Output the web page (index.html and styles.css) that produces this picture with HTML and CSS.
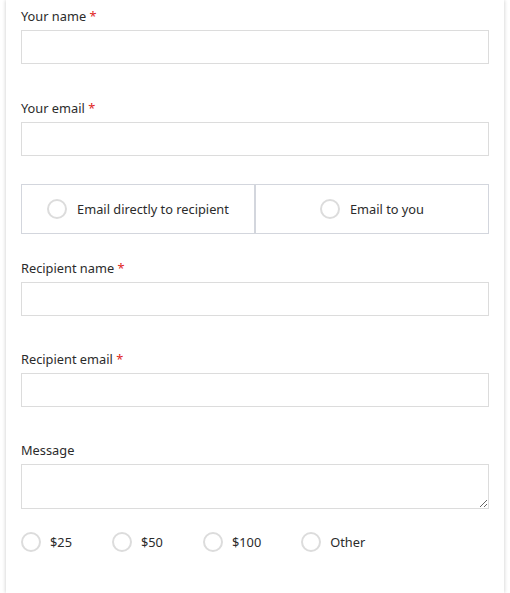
FILE: index.html
```html
<!DOCTYPE html>
<html lang="en">
<head>
<meta charset="utf-8">
<title>Gift card</title>
<link rel="stylesheet" href="styles.css">
</head>
<body>
<div class="card">
  <form class="form">
    <div class="field">
      <label class="label" for="yn">Your name <span class="req">*</span></label>
      <input class="input" id="yn" type="text">
    </div>
    <div class="field field-tight">
      <label class="label" for="ye">Your email <span class="req">*</span></label>
      <input class="input" id="ye" type="email">
    </div>
    <div class="choice-group">
      <label class="choice-box">
        <input class="radio" type="radio" name="send">
        <span>Email directly to recipient</span>
      </label>
      <label class="choice-box">
        <input class="radio" type="radio" name="send">
        <span>Email to you</span>
      </label>
    </div>
    <div class="field field-r">
      <label class="label" for="rn">Recipient name <span class="req">*</span></label>
      <input class="input" id="rn" type="text">
    </div>
    <div class="field field-r">
      <label class="label" for="re">Recipient email <span class="req">*</span></label>
      <input class="input" id="re" type="email">
    </div>
    <div class="field field-msg">
      <label class="label" for="msg">Message</label>
      <textarea class="textarea" id="msg"></textarea>
    </div>
    <div class="amounts">
      <label class="amount"><input class="radio" type="radio" name="amt"><span>$25</span></label>
      <label class="amount"><input class="radio" type="radio" name="amt"><span>$50</span></label>
      <label class="amount"><input class="radio" type="radio" name="amt"><span>$100</span></label>
      <label class="amount"><input class="radio" type="radio" name="amt"><span>Other</span></label>
    </div>
  </form>
</div>
</body>
</html>
```

FILE: styles.css
```css
html, body {
  margin: 0;
  padding: 0;
  background: #fff;
}
body {
  font-family: "Noto Sans", "Open Sans", sans-serif;
  font-size: 12.8px;
  color: #2b2b2b;
}
.card {
  margin-left: 6px;
  width: 498px;
  height: 593px;
  overflow: hidden;
  background: #fff;
  box-shadow: 0 0 4px rgba(0, 0, 0, 0.22);
  box-sizing: border-box;
  padding: 6px 15px 0;
}
.form {
  display: flex;
  flex-direction: column;
}
.field {
  display: flex;
  flex-direction: column;
  margin-bottom: 34px;
}
.field-tight {
  margin-bottom: 28px;
}
.field-r {
  margin-bottom: 33px;
}
.field-msg {
  margin-bottom: 23px;
}
.label {
  display: block;
  line-height: 20px;
  margin-bottom: 4px;
}
.req {
  color: #e02424;
}
.input, .textarea {
  display: block;
  box-sizing: border-box;
  width: 100%;
  height: 34px;
  margin: 0;
  border: 1px solid #dcdcdc;
  border-radius: 0;
  background: #fff;
  font: inherit;
  outline: none;
}
.textarea {
  height: 45px;
  resize: vertical;
}
.choice-group {
  display: flex;
  height: 50px;
  margin-bottom: 24px;
}
.choice-box {
  flex: 1;
  display: flex;
  align-items: center;
  justify-content: center;
  gap: 10px;
  border: 1px solid #d3d6dd;
  box-sizing: border-box;
}
.radio {
  appearance: none;
  -webkit-appearance: none;
  margin: 0;
  width: 20px;
  height: 20px;
  box-sizing: border-box;
  border: 2px solid #dcdcdc;
  border-radius: 50%;
  background: #fff;
  flex: none;
}
.amounts {
  display: flex;
  gap: 40px;
  height: 20px;
  align-items: center;
}
.amount {
  display: flex;
  align-items: center;
  gap: 9px;
}
```
